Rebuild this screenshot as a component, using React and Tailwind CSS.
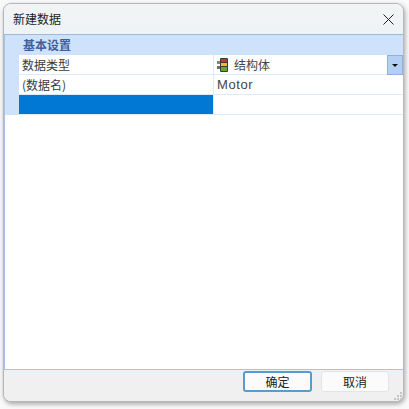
const cjk = { fontFamily: '"Noto Sans CJK SC", sans-serif' };

function StructIcon() {
  return (
    <svg width="12" height="14" viewBox="0 0 12 14" className="shrink-0">
      <rect x="0" y="3" width="3" height="3" fill="#8c8478" />
      <rect x="0" y="8" width="3" height="3" fill="#77705f" />
      <rect x="3" y="0" width="8" height="14" rx="1" fill="#3f3a33" />
      <rect x="4" y="1" width="6" height="3" fill="#cf2f38" />
      <rect x="4" y="5" width="6" height="3" fill="#e6c02c" />
      <rect x="4" y="9" width="6" height="4" fill="#62a832" />
    </svg>
  );
}

function Row({ left, right, selected, tail }) {
  return (
    <div className="flex h-5 bg-white">
      <div className="w-[14px] shrink-0 bg-[#cfe2fb]" />
      <div className={`flex w-[194px] shrink-0 items-center border-b pl-[3px] text-[12px] text-[#3a3a3a] ${selected ? "border-[#dceafa] bg-[#0078d4]" : "border-[#dceafa]"}`}>
        {left}
      </div>
      <div className="w-px shrink-0 bg-[#dceafa]" />
      <div className="flex min-w-0 flex-1 items-center border-b border-[#dceafa] pl-[3px] text-[12px] text-[#444]">
        {right}
      </div>
      {tail}
    </div>
  );
}

function Grip() {
  const dots = [[6, 0], [3, 3], [6, 3], [0, 6], [3, 6], [6, 6]];
  return (
    <svg width="8" height="8" viewBox="0 0 8 8" className="absolute right-[1px] bottom-[1px]">
      {dots.map(([x, y]) => (
        <rect key={`${x}-${y}`} x={x} y={y} width="2" height="2" fill="#c4c4c4" />
      ))}
    </svg>
  );
}

export default function App() {
  return (
    <div className="flex h-[409px] w-[409px] bg-[#fafafa] pt-[3px] pl-[3px]" style={cjk}>
      <div className="flex h-[399px] w-[401px] flex-col overflow-hidden rounded-lg border border-[#b4b8bc] bg-[#f0f0f0] shadow-[1px_2px_5px_rgba(0,0,0,0.35)]">
        <div className="flex h-[31px] shrink-0 items-center justify-between border-b border-[#9fb9d8] bg-gradient-to-b from-[#f1f4f4] to-[#eef3f6] pr-[9px] pl-[9px]">
          <span className="text-[12px] text-[#222]">新建数据</span>
          <svg width="11" height="11" viewBox="0 0 11 11" fill="none" stroke="#222" strokeWidth="1">
            <path d="M0.5 0.5 L10.5 10.5 M10.5 0.5 L0.5 10.5" />
          </svg>
        </div>
        <div className="flex min-h-0 flex-1 flex-col border-l border-[#a9c3e3] bg-white">
          <div className="flex h-5 shrink-0 items-center bg-[#cfe2fb] pl-[18px] text-[12px] font-bold text-[#3f5f9f]">
            基本设置
          </div>
          <Row
            left="数据类型"
            right={
              <span className="flex items-center gap-[5px]">
                <StructIcon />
                结构体
              </span>
            }
            tail={
              <div className="flex w-4 shrink-0 items-center justify-center border border-[#8fb0e0] bg-[#b4cff5]">
                <svg width="6" height="3" viewBox="0 0 6 3">
                  <path d="M0 0 H6 L3 3 Z" fill="#111" />
                </svg>
              </div>
            }
          />
          <Row left="(数据名)" right={<span className="text-[13px] tracking-[0.6px]" style={{ fontFamily: '"Liberation Sans", sans-serif' }}>Motor</span>} />
          <Row left="" right="" selected />
        </div>
        <div className="relative flex h-[32px] shrink-0 items-start justify-end gap-[9px] border-t border-[#a9c3e3] bg-[#f0f0f0] pt-[1px] pr-[14px]">
          <button className="flex h-[21px] w-[69px] items-center justify-center rounded-[3px] border-2 border-[#5b9bc9] bg-[#fbfbfb] text-[12px] text-[#222]">
            确定
          </button>
          <button className="flex h-[21px] w-[68px] items-center justify-center rounded-[3px] border border-[#e4e4e4] bg-[#fbfbfb] text-[12px] text-[#222]">
            取消
          </button>
          <Grip />
        </div>
      </div>
    </div>
  );
}
